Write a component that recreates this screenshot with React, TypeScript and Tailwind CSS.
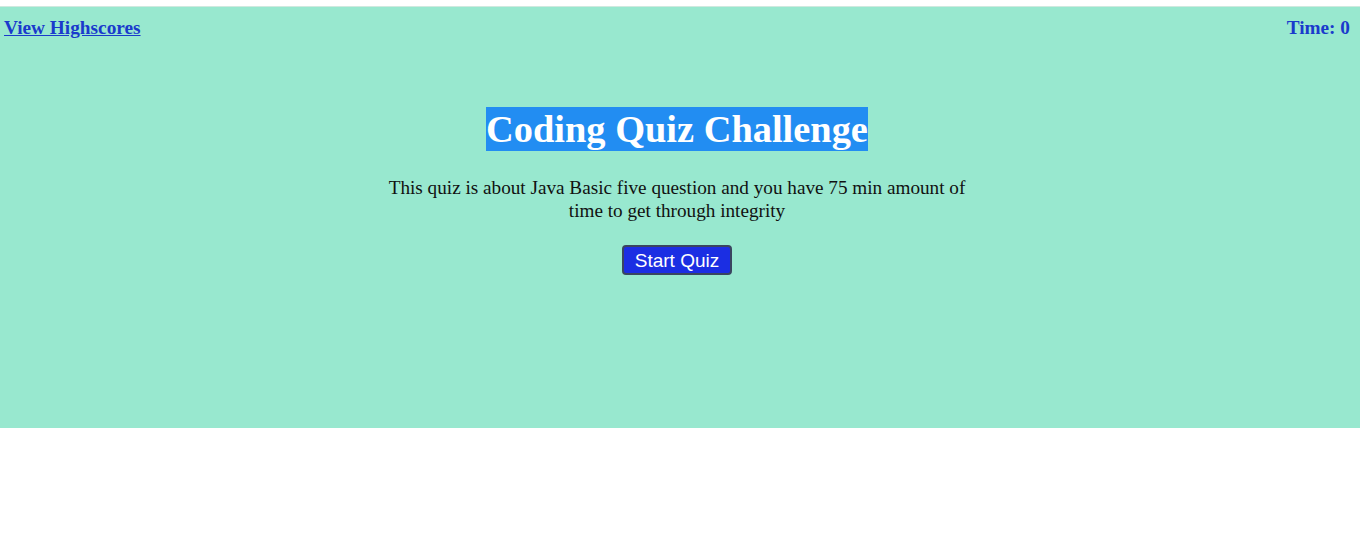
import React from 'react';

const App: React.FC = () => {
  return (
    <div className="min-h-[559px] bg-white pt-[6px]" style={{ fontFamily: '"Liberation Serif", serif' }}>
      <div className="h-[422px] bg-[#98e8cf] border-t border-[#cfe9df]">
        <header className="flex justify-between px-[4px] pt-[9px] text-[19.3px] font-bold leading-[24px]">
          <a href="#" className="text-[#1a3acc] underline">View Highscores</a>
          <span className="text-[#1a3acc] pr-[6px]">Time: 0</span>
        </header>
        <main className="flex flex-col items-center mt-[67px] pr-[6px]">
          <h1 className="bg-[#228df2] text-white font-bold text-[38.4px] leading-[44px]">Coding Quiz Challenge</h1>
          <p className="mt-[25px] w-[600px] text-center text-[19.2px] leading-[23px] text-[#111]">
            This quiz is about Java Basic five question and you have 75 min amount of time to get through integrity
          </p>
          <button
            className="mt-[23px] h-[30px] w-[110px] rounded-[4px] border-2 border-[#3a4560] bg-[#1b2ee3] text-[19px] text-white"
            style={{ fontFamily: '"Liberation Sans", Arial, sans-serif' }}
          >
            Start Quiz
          </button>
        </main>
      </div>
    </div>
  );
};

export default App;
